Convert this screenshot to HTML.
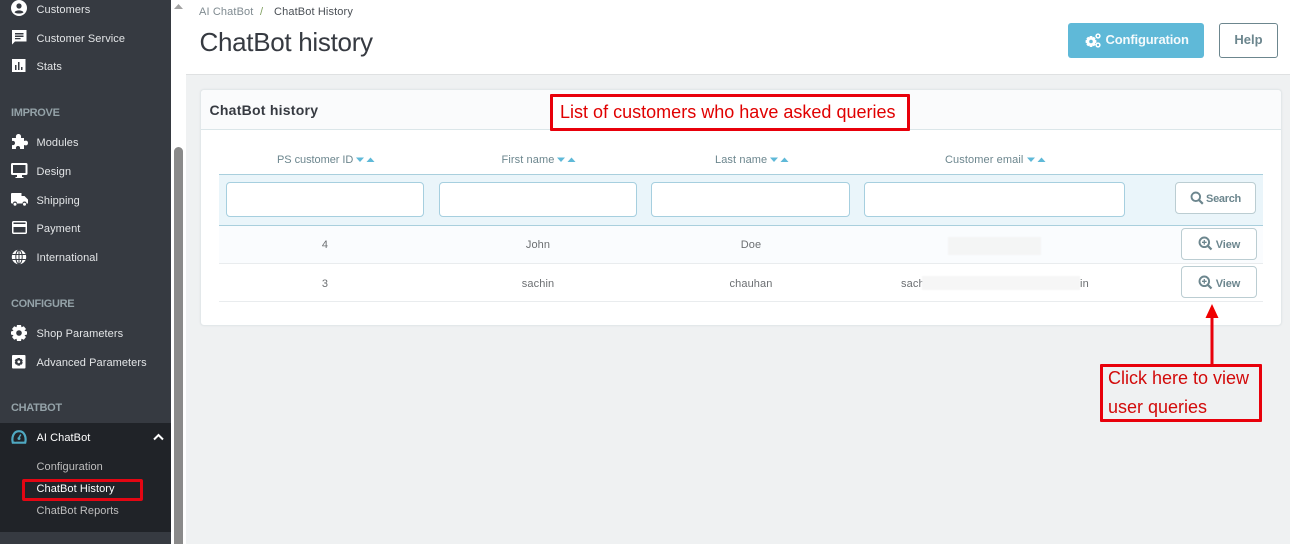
<!DOCTYPE html>
<html><head><meta charset="utf-8">
<style>
*{box-sizing:border-box}
html,body{margin:0;padding:0}
body{width:1290px;height:544px;overflow:hidden;position:relative;background:#eff1f2;font-family:"Liberation Sans",sans-serif;}
.a{position:absolute;white-space:nowrap}
.nav{color:#e3e5e7;font-size:11px;left:36.5px;line-height:14px;letter-spacing:.07px;margin-top:1px}
.sec{color:#94a2a8;font-size:11px;font-weight:bold;left:11px;line-height:14px;letter-spacing:-.3px;margin-top:1px}
.th{color:#6c868e;font-size:11px;line-height:14px;letter-spacing:.1px;margin-top:1px}
.td{color:#6c6f72;font-size:11px;line-height:14px;text-align:center;letter-spacing:.12px;margin-top:1px}
.inp{position:absolute;top:182px;height:35px;background:#fff;border:1px solid #a6cfdf;border-radius:4px}
.btn{position:absolute;background:#fff;border:1px solid #bbcdd2;border-radius:4px;color:#6c868e;font-size:11px;font-weight:bold;text-align:center;letter-spacing:-.1px}
.ic{position:absolute}
</style></head><body>

<!-- sidebar -->
<div class="a" style="left:0;top:0;width:171px;height:544px;background:#363a41"></div>
<div class="a" style="left:0;top:423px;width:171px;height:109px;background:#202328"></div>
<div class="a" style="left:171px;top:0;width:15px;height:544px;background:#fff"></div>
<div class="a" style="left:174px;top:147px;width:9px;height:397px;background:#8a8a8a;border-radius:5px 5px 0 0"></div>
<svg class="ic" style="left:174px;top:2px" width="10" height="8"><path d="M0 7L4.500 2L9 7Z" fill="#a3a3a3"/></svg>

<!-- icons -->
<svg class="ic" style="left:11px;top:0" width="17" height="17" viewBox="0 0 17 17"><circle cx="8" cy="8" r="8" fill="#fff"/><circle cx="8" cy="6" r="2.600" fill="#363a41"/><path d="M3.500 12.200C5 9.800 11 9.800 12.500 12.200C11 14 5 14 3.500 12.200Z" fill="#363a41"/></svg>
<svg class="ic" style="left:11px;top:30px" width="17" height="16" viewBox="0 0 17 16"><path d="M1 0H15.500V11.500H4L1 14.500Z" fill="#fff"/><path d="M4 3H12.500V4.500H4ZM4 5.500H12.500V7H4ZM4 8H9.500V9.300H4Z" fill="#363a41"/></svg>
<svg class="ic" style="left:12px;top:59px" width="14" height="14" viewBox="0 0 14 14"><rect width="13.500" height="13" fill="#fff"/><path d="M3 6H4.500V11H3ZM6 3H7.500V11H6ZM9 8H10.500V11H9Z" fill="#363a41"/></svg>
<svg class="ic" style="left:11px;top:134px" width="17" height="16" viewBox="0 0 17 16"><path d="M1 4H5C4.500 1 6 0 7.500 0S10.500 1 10 4H13V7C15.500 6 17 7 17 9S15.500 12 13 11V15H9C9.500 12.500 8 12 7 12S4.500 12.500 5 15H1V11C3 11.500 4 10.500 4 9S3 6.500 1 7Z" fill="#fff"/></svg>
<svg class="ic" style="left:11px;top:163px" width="17" height="16" viewBox="0 0 17 16"><path d="M1.500 0H15C16 0 16.500 .5 16.500 1.500V10.500C16.500 11.500 16 12 15 12H11V14H12.500V15H4.500V14H6V12H1.500C.5 12 0 11.500 0 10.500V1.500C0 .5 .5 0 1.500 0ZM2 2V10H14.500V2Z" fill="#fff"/></svg>
<svg class="ic" style="left:11px;top:193px" width="17" height="14" viewBox="0 0 17 14"><path d="M1 0H10.500V3H13.500L17 6.500V10.500H15.500A2 2 0 0 0 11.500 10.500H6A2 2 0 0 0 2 10.500H1C.4 10.500 0 10 0 9.500V1C0 .4 .4 0 1 0Z" fill="#fff"/><circle cx="4" cy="11.200" r="1.500" fill="#fff"/><circle cx="13.500" cy="11.200" r="1.500" fill="#fff"/></svg>
<svg class="ic" style="left:12px;top:221px" width="15" height="13" viewBox="0 0 15 13"><path fill-rule="evenodd" d="M1.500 0H13.500C14.300 0 15 .7 15 1.500V11.500C15 12.300 14.300 13 13.500 13H1.500C.7 13 0 12.300 0 11.500V1.500C0 .7 .7 0 1.500 0ZM1.500 1.500V3H13.500V1.500ZM1.500 6V11.500H13.500V6Z" fill="#fff"/></svg>
<svg class="ic" style="left:11px;top:249px" width="16" height="16" viewBox="0 0 16 16"><circle cx="8" cy="8" r="7.200" fill="#fff"/><g fill="none" stroke="#363a41" stroke-width="1"><ellipse cx="8" cy="8" rx="3.200" ry="7"/><path d="M8 1V15M1.200 5.500H14.800M1.200 10.500H14.800"/></g></svg>
<svg class="ic" style="left:11px;top:325px" width="16" height="16" viewBox="0 0 16 16"><path d="M6 0H10L10.500 2.200L12.800 1.200L15 4L13.500 5.800L16 6.500V9.500L13.500 10.200L15 12L12.800 14.800L10.500 13.800L10 16H6L5.500 13.800L3.200 14.800L1 12L2.500 10.200L0 9.500V6.500L2.500 5.800L1 4L3.200 1.200L5.500 2.200Z" fill="#fff"/><circle cx="8" cy="8" r="2.800" fill="#363a41"/></svg>
<svg class="ic" style="left:12px;top:355px" width="14" height="14" viewBox="0 0 14 14"><rect width="13.500" height="13.500" rx="1" fill="#fff"/><path d="M5.500 3H8L8.300 4.100L9.500 3.800L10.800 5.800L10 6.800L10.800 7.800L9.500 9.800L8.300 9.500L8 10.600H5.500L5.200 9.500L4 9.800L2.700 7.800L3.500 6.800L2.700 5.800L4 3.800L5.200 4.100Z" fill="#363a41"/><circle cx="6.800" cy="6.800" r="1.400" fill="#fff"/></svg>
<svg class="ic" style="left:11px;top:430px" width="16" height="14" viewBox="0 0 16 14"><path d="M4 12.700H1.800C.6 8 2 1.200 8 1.200S15.400 8 14.200 12.700H5.500" fill="none" stroke="#4fa9c2" stroke-width="2.200" stroke-linecap="round"/><path d="M8 7.500L9.800 4.500" stroke="#4fa9c2" stroke-width="1.500"/><circle cx="8" cy="8.500" r="1.500" fill="#4fa9c2"/></svg>
<svg class="ic" style="left:153px;top:433px" width="11" height="8" viewBox="0 0 11 8"><path d="M1 6.500L5.500 2L10 6.500" fill="none" stroke="#fff" stroke-width="2"/></svg>

<div class="a nav" style="top:2px">Customers</div>
<div class="a nav" style="top:31px">Customer Service</div>
<div class="a nav" style="top:59px">Stats</div>
<div class="a sec" style="top:105px">IMPROVE</div>
<div class="a nav" style="top:135px">Modules</div>
<div class="a nav" style="top:164px">Design</div>
<div class="a nav" style="top:193px">Shipping</div>
<div class="a nav" style="top:221px">Payment</div>
<div class="a nav" style="top:250px">International</div>
<div class="a sec" style="top:296px">CONFIGURE</div>
<div class="a nav" style="top:326px">Shop Parameters</div>
<div class="a nav" style="top:355px">Advanced Parameters</div>
<div class="a sec" style="top:400px">CHATBOT</div>
<div class="a nav" style="top:430px;color:#fff">AI ChatBot</div>
<div class="a nav" style="top:459px;color:#bebebe">Configuration</div>
<div class="a nav" style="top:481px;color:#fff">ChatBot History</div>
<div class="a nav" style="top:503px;color:#bebebe">ChatBot Reports</div>
<div class="a" style="left:22px;top:479px;width:121px;height:22px;border:3px solid #e30613;border-radius:2px"></div>

<!-- header -->
<div class="a" style="left:186px;top:0;width:1104px;height:75px;background:#fff;border-bottom:1px solid #dfe1e2"></div>
<div class="a" style="left:199px;top:5px;font-size:11px;line-height:14px;color:#7f8a90;letter-spacing:.13px">AI ChatBot</div>
<div class="a" style="left:260px;top:5px;font-size:11px;line-height:14px;color:#7fa05f">/</div>
<div class="a" style="left:274px;top:5px;font-size:11px;line-height:14px;color:#4a4f55;letter-spacing:.13px">ChatBot History</div>
<div class="a" style="left:199.500px;top:26px;font-size:26px;line-height:32px;color:#363a41;letter-spacing:-.3px">ChatBot history</div>
<div class="a" style="left:1068px;top:23px;width:136px;height:35px;background:#5fb9d8;border-radius:3px"></div>
<svg class="ic" style="left:1085px;top:33px" width="16" height="15" viewBox="0 0 16 15"><path d="M4.800 3H7.200L7.600 4.400L9 3.800L10.600 5.500L10 6.800L11.400 7.300V9.700L10 10.200L10.600 11.500L9 13.200L7.600 12.600L7.200 14H4.800L4.400 12.600L3 13.200L1.400 11.500L2 10.200L.6 9.700V7.300L2 6.800L1.400 5.500L3 3.800L4.400 4.400Z" fill="#fff"/><circle cx="6" cy="8.500" r="1.800" fill="#5fb9d8"/><circle cx="13" cy="3" r="1.900" fill="none" stroke="#fff" stroke-width="1.500"/><circle cx="13" cy="12" r="1.900" fill="none" stroke="#fff" stroke-width="1.500"/></svg>
<div class="a" style="left:1105.500px;top:31.500px;font-size:13px;line-height:16px;font-weight:bold;color:#f4fafc;letter-spacing:-.15px">Configuration</div>
<div class="a" style="left:1219px;top:23px;width:59px;height:35px;background:#fff;border:1px solid #6c868e;border-radius:3px;color:#6c868e;font-size:13px;font-weight:bold;line-height:31px;text-align:center">Help</div>

<!-- card -->
<div class="a" style="left:200px;top:89px;width:1082px;height:237px;background:#fff;border:1px solid #e3e8ea;border-radius:4px;box-shadow:0 0 2px rgba(0,0,0,.05)"></div>
<div class="a" style="left:201px;top:90px;width:1080px;height:40px;background:#fafbfc;border-bottom:1px solid #dbe6e9;border-radius:4px 4px 0 0"></div>
<div class="a" style="left:209.500px;top:101px;font-size:14px;line-height:18px;font-weight:bold;color:#363a41;letter-spacing:.25px">ChatBot history</div>

<!-- table head -->
<div class="a th" style="left:277px;top:152px;letter-spacing:-.05px">PS customer ID</div>
<div class="a th" style="left:501.500px;top:152px">First name</div>
<div class="a th" style="left:715px;top:152px">Last name</div>
<div class="a th" style="left:945px;top:152px">Customer email</div>
<svg class="ic" style="left:355.500px;top:157px" width="20" height="6"><path d="M0 0.500H8L4 5ZM10.500 5H18.500L14.500 .5Z" fill="#5fb9d8"/></svg>
<svg class="ic" style="left:557px;top:157px" width="20" height="6"><path d="M0 0.500H8L4 5ZM10.500 5H18.500L14.500 .5Z" fill="#5fb9d8"/></svg>
<svg class="ic" style="left:770px;top:157px" width="20" height="6"><path d="M0 0.500H8L4 5ZM10.500 5H18.500L14.500 .5Z" fill="#5fb9d8"/></svg>
<svg class="ic" style="left:1027px;top:157px" width="20" height="6"><path d="M0 0.500H8L4 5ZM10.500 5H18.500L14.500 .5Z" fill="#5fb9d8"/></svg>

<!-- filter row -->
<div class="a" style="left:219px;top:174px;width:1044px;height:52px;background:#eaf5fa;border-top:1px solid #a9cfdd;border-bottom:1px solid #a9cfdd"></div>
<div class="inp" style="left:226px;width:198px"></div>
<div class="inp" style="left:439px;width:198px"></div>
<div class="inp" style="left:651px;width:199px"></div>
<div class="inp" style="left:864px;width:261px"></div>
<div class="btn" style="left:1175px;top:182px;width:81px;height:32px;line-height:33px;padding-left:16px;letter-spacing:-.3px">Search</div>
<svg class="ic" style="left:1190px;top:191px" width="14" height="14" viewBox="0 0 14 14"><circle cx="5.800" cy="5.800" r="4.300" fill="none" stroke="#6c868e" stroke-width="1.900"/><path d="M9 9L12.800 12.800" stroke="#6c868e" stroke-width="2.200"/></svg>

<!-- rows -->
<div class="a" style="left:219px;top:226px;width:1044px;height:38px;background:#fafcfe;border-bottom:1px solid #e9ecee"></div>
<div class="a" style="left:219px;top:264px;width:1044px;height:38px;background:#fff;border-bottom:1px solid #e9ecee"></div>
<div class="a td" style="left:225px;width:200px;top:237px">4</div>
<div class="a td" style="left:438px;width:200px;top:237px">John</div>
<div class="a td" style="left:651px;width:200px;top:237px">Doe</div>
<div class="a" style="left:948px;top:237px;width:93px;height:18px;background:#f4f5f5;filter:blur(.6px)"></div>
<div class="a td" style="left:225px;width:200px;top:276px">3</div>
<div class="a td" style="left:438px;width:200px;top:276px">sachin</div>
<div class="a td" style="left:651px;width:200px;top:276px">chauhan</div>
<div class="a td" style="left:901px;top:276px">sach</div>
<div class="a" style="left:922px;top:276px;width:158px;height:14px;background:#f6f6f6;filter:blur(.6px)"></div>
<div class="a td" style="left:1080px;top:276px">in</div>

<div class="btn" style="left:1181px;top:228px;width:76px;height:32px;line-height:33px;padding-left:18px">View</div>
<div class="btn" style="left:1181px;top:266px;width:76px;height:32px;line-height:35px;padding-left:18px">View</div>
<svg class="ic" style="left:1198px;top:236px" width="15" height="15" viewBox="0 0 15 15"><circle cx="6.300" cy="6.300" r="4.800" fill="none" stroke="#6c868e" stroke-width="1.900"/><path d="M9.800 9.800L13.500 13.500" stroke="#6c868e" stroke-width="2.200"/><path d="M4 6.300H8.600M6.300 4V8.600" stroke="#6c868e" stroke-width="1.300"/></svg>
<svg class="ic" style="left:1198px;top:275px" width="15" height="15" viewBox="0 0 15 15"><circle cx="6.300" cy="6.300" r="4.800" fill="none" stroke="#6c868e" stroke-width="1.900"/><path d="M9.800 9.800L13.500 13.500" stroke="#6c868e" stroke-width="2.200"/><path d="M4 6.300H8.600M6.300 4V8.600" stroke="#6c868e" stroke-width="1.300"/></svg>

<!-- annotations -->
<div class="a" style="left:550px;top:94px;width:360px;height:37px;background:#fff;border:3px solid #e8000b;border-radius:1px"></div>
<div class="a" style="left:560px;top:101px;font-size:18px;line-height:22px;color:#e00000;letter-spacing:.01px">List of customers who have asked queries</div>
<svg class="ic" style="left:1200px;top:302px" width="26" height="64" viewBox="0 0 26 64"><path d="M12 2L18.500 16H5.500Z" fill="#f00000"/><path d="M12 14V63" stroke="#e8000b" stroke-width="3"/></svg>
<div class="a" style="left:1100px;top:364px;width:162px;height:58px;background:#eff1f2;border:3px solid #e8000b;border-radius:1px"></div>
<div class="a" style="left:1108px;top:364px;font-size:18px;line-height:29px;color:#d20a0a;white-space:normal;width:150px">Click here to view<br>user queries</div>

</body></html>
